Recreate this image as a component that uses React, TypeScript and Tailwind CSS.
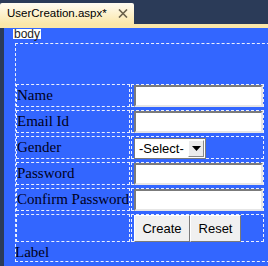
import React from 'react';

const rows = ['Name', 'Email Id', 'Gender', 'Password', 'Confirm Password'];

const TextBox: React.FC = () => (
  <div className="ml-[2px] w-[129px] h-[22px] bg-white border-2 border-t-[#7b7b7b] border-l-[#7b7b7b] border-r-[#e6e6e6] border-b-[#e6e6e6]" />
);

const SelectBox: React.FC = () => (
  <div className="ml-[2px] mt-px w-[72px] h-[21px] bg-white border border-[#7b7b7b] flex items-center justify-between pl-[4px] pr-px">
    <span className="text-[13px] leading-none text-black font-['Liberation_Sans',Arial,sans-serif]">-Select-</span>
    <span className="w-[16px] h-[17px] bg-[#ececec] border border-t-white border-l-white border-r-[#8a8a8a] border-b-[#8a8a8a] flex items-center justify-center">
      <svg width="9" height="5" viewBox="0 0 9 5">
        <path d="M0 0h9L4.5 5z" fill="#000" />
      </svg>
    </span>
  </div>
);

const FormButton: React.FC<{ label: string; width: string }> = ({ label, width }) => (
  <button
    className={`${width} h-[27px] bg-[#f0f0f0] border border-t-white border-l-white border-r-[#7a7a7a] border-b-[#7a7a7a] text-[13px] text-black font-['Liberation_Sans',Arial,sans-serif]`}
  >
    {label}
  </button>
);

export default function App() {
  return (
    <div className="w-[268px] h-[266px] bg-[#2b3b58] flex flex-col overflow-hidden">
      {/* document tab */}
      <div className="h-6 flex items-end">
        <div className="w-[134px] h-[21px] rounded-t-[2px] bg-gradient-to-b from-[#fffcf2] to-[#fbe7a9] flex items-center justify-between pl-[7px] pr-[6px]">
          <span className="text-[11.5px] text-black font-['Liberation_Sans',Arial,sans-serif]">UserCreation.aspx*</span>
          <svg width="10" height="9" viewBox="0 0 10 9">
            <path d="M1 0.5l8 8M9 0.5l-8 8" stroke="#6b624c" strokeWidth="1.6" />
          </svg>
        </div>
      </div>
      <div className="h-1 bg-[#fbe7a9]" />

      {/* design surface */}
      <div className="flex-1 ml-1 bg-[#3366ff] pl-[9px] pt-px overflow-hidden">
        <div className="w-fit bg-white h-[10px] px-px text-[12px] leading-[10px] text-[#222] font-['Liberation_Sans',Arial,sans-serif]">
          body
        </div>

        <div className="mt-[4px] ml-[2px] w-[260px] h-[219px] border border-dashed border-white/90 border-r-0 pt-[40px]">
          <div className="grid grid-cols-[114px_133px] auto-rows-[23px] gap-x-[1px] gap-y-[3px]">
            {rows.map((label, i) => (
              <React.Fragment key={label}>
                <div className="border border-dashed border-white/90 flex items-center">
                  <span className="whitespace-nowrap text-[15px] leading-none text-[#00001a] font-['Liberation_Serif','Times_New_Roman',serif]">
                    {label}
                  </span>
                </div>
                <div className="border border-dashed border-white/90">
                  {i === 2 ? <SelectBox /> : <TextBox />}
                </div>
              </React.Fragment>
            ))}
            <div className="h-[28px] border border-dashed border-white/90" />
            <div className="h-[28px] border border-dashed border-white/90 flex pl-[2px]">
              <FormButton label="Create" width="w-[56px]" />
              <FormButton label="Reset" width="w-[51px]" />
            </div>
          </div>
          <div className="-ml-px mt-[8px] text-[15px] leading-none text-[#00001a] font-['Liberation_Serif','Times_New_Roman',serif]">
            Label
          </div>
        </div>
      </div>
    </div>
  );
}
